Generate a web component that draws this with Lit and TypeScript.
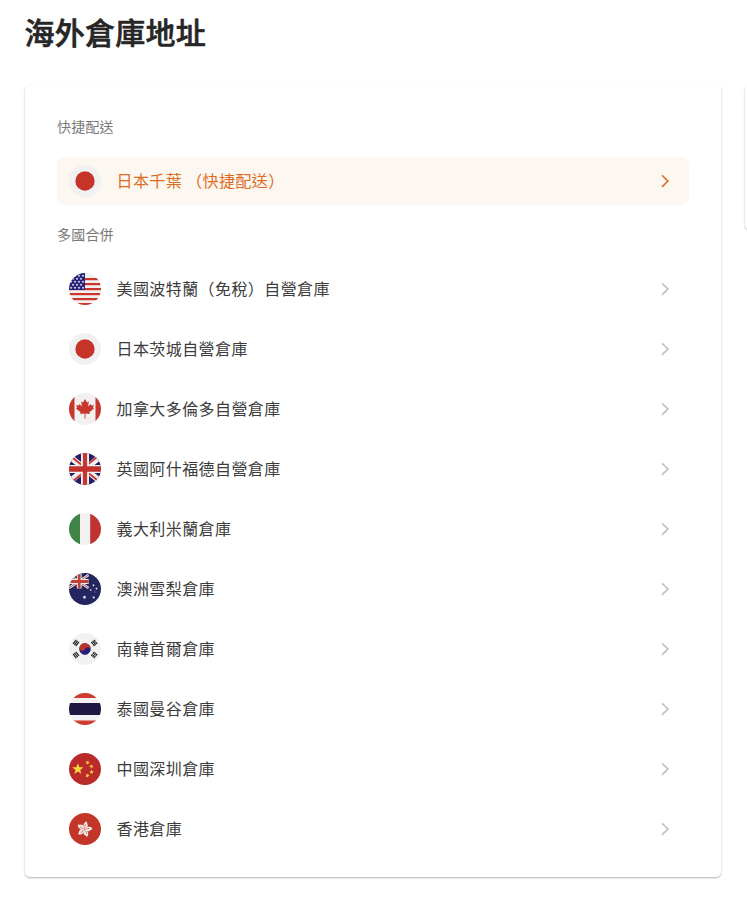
import { LitElement, html, css, svg, type TemplateResult } from "lit";
import { customElement, property } from "lit/decorators.js";

const star = (cx: number, cy: number, r: number, rotate = 0, points = 5, inner = 0.4): string => {
  const out: string[] = [];
  for (let i = 0; i < points * 2; i++) {
    const a = ((rotate - 90 + (i * 180) / points) * Math.PI) / 180;
    const d = i % 2 ? r * inner : r;
    out.push(`${(cx + d * Math.cos(a)).toFixed(2)},${(cy + d * Math.sin(a)).toFixed(2)}`);
  }
  return out.join(" ");
};

const trigram = (x: number, y: number, angle: number, broken: boolean[]) => svg`
  <g transform="translate(${x} ${y}) rotate(${angle})" fill="#2b2b2b">
    ${broken.map((b, i) => {
      const ty = -2.4 + i * 1.7;
      return b
        ? svg`<rect x="-2.6" y=${ty} width="2.4" height="1.3"/><rect x=".2" y=${ty} width="2.4" height="1.3"/>`
        : svg`<rect x="-2.6" y=${ty} width="5.2" height="1.3"/>`;
    })}
  </g>`;

const FLAGS: Record<string, TemplateResult> = {
  jp: svg`<rect width="32" height="32" fill="#f1f1f2"/><circle cx="16" cy="16" r="9.7" fill="#c63429"/>`,
  us: svg`<rect width="32" height="32" fill="#f0f0f0"/>
    ${[5, 10, 15, 20, 25, 30].map((y) => svg`<rect y=${y} width="32" height="2.2" fill="#cd352b"/>`)}
    <rect width="16" height="17" fill="#231f78"/>
    ${[2.2, 5.2, 8.2, 11.2, 14.2].map((y, r) =>
      [2, 6, 10, 14].map((x) => svg`<polygon points=${star(x - (r % 2 ? 2 : 0), y + 0.6, 1.5)} fill="#f0f0f0"/>`)
    )}`,
  ca: svg`<rect width="32" height="32" fill="#f1f1f1"/>
    <path d="M0 0h5.500v32H0zM26.500 0H32v32h-5.500z" fill="#c8372d"/>
    <path d="M16 6l2 3.400 1.900-.9-.8 4.900 2.500-2.500.7 1.500 2.500-.4-.8 2.700 1 .7-4.600 3.900.5 1.700-4.500-.6.100 5h-1l.1-5-4.500.6.5-1.700-4.600-3.900 1-.7-.8-2.700 2.500.4.700-1.500 2.500 2.500-.8-4.900 1.900.9z" fill="#c8372d"/>`,
  gb: svg`<rect width="32" height="32" fill="#251d67"/>
    <path d="M0 3L32 29M32 3L0 29" stroke="#f1f1f1" stroke-width="6"/>
    <path d="M0 1.800L16 14.800M32 30.200L16 17.200M30.500 2L16 13.800M1.500 30L16 18.200" stroke="#c8372d" stroke-width="1.800"/>
    <path d="M16 0v32M0 16h32" stroke="#f1f1f1" stroke-width="8"/>
    <path d="M16 0v32" stroke="#c8372d" stroke-width="4.200"/><path d="M0 16h32" stroke="#bf322e" stroke-width="5.600"/>`,
  it: svg`<rect width="32" height="32" fill="#f1f1f1"/><rect width="11" height="32" fill="#418447"/><rect x="21.200" width="11" height="32" fill="#bf3331"/>`,
  au: svg`<rect width="32" height="32" fill="#23265f"/>
    <path d="M0 2L19.500 15M19.500 2L0 15" stroke="#eee" stroke-width="2.600"/>
    <path d="M0 2L19.500 15M19.500 2L0 15" stroke="#c7403a" stroke-width=".9"/>
    <path d="M10.200 0v15.500M0 8.500h19.700" stroke="#eee" stroke-width="4.800"/>
    <path d="M10.200 0v15.500M0 8.500h19.700" stroke="#c24138" stroke-width="2.800"/>
    <g fill="#eef0f8">
      <polygon points=${star(15.5, 24.2, 1.9, 0, 7, 0.5)}/>
      <polygon points=${star(24.5, 12.4, 1.3, 0, 7, 0.5)}/>
      <polygon points=${star(21.7, 17, 1.2, 0, 7, 0.5)}/>
      <polygon points=${star(27.5, 15.6, 1.3, 0, 7, 0.5)}/>
      <polygon points=${star(24.7, 24.5, 1.4, 0, 7, 0.5)}/>
      <polygon points=${star(25.8, 19, 0.8)}/>
    </g>`,
  kr: svg`<rect width="32" height="32" fill="#f2f2f2"/>
    <g transform="rotate(24 16 16)">
      <circle cx="16" cy="16" r="5.800" fill="#271f78"/>
      <path d="M10.200 16a5.800 5.800 0 0 1 11.600 0a2.900 2.900 0 0 0-5.800 0a2.900 2.900 0 0 1-5.800 0z" fill="#bd3328"/>
    </g>
    ${trigram(7, 10, -52, [false, false, false])}
    ${trigram(25.2, 10, 52, [true, false, true])}
    ${trigram(7, 22, 52, [false, true, false])}
    ${trigram(25.2, 22, -52, [true, true, true])}`,
  th: svg`<rect width="32" height="32" fill="#f1f1f1"/><rect width="32" height="5" fill="#d03a31"/><rect y="27.500" width="32" height="5" fill="#d03a31"/><rect y="10" width="32" height="12" fill="#1f1843"/>`,
  cn: svg`<rect width="32" height="32" fill="#ba2a28"/>
    <g fill="#f7d83e">
      <polygon points=${star(8.9, 16.2, 6)}/>
      <polygon points=${star(18.5, 9.6, 2.4, 20)}/>
      <polygon points=${star(22.4, 13.4, 2.4, 45)}/>
      <polygon points=${star(22.6, 19, 2.4, 5)}/>
      <polygon points=${star(18.4, 22.6, 2.4, 20)}/>
    </g>`,
  hk: svg`<rect width="32" height="32" fill="#c43529"/>
    ${[20, 92, 164, 236, 308].map(
      (a) => svg`<g transform="rotate(${a} 15.500 16.200)">
        <path d="M15.500 15.800C12.300 13.700 12 9.700 15.300 8C15.100 10 18.300 10.700 17.300 13.400C16.900 14.700 16.300 15.400 15.500 15.800z" fill="#f4efee"/>
        <path d="M15.500 15Q14.200 12.800 14.800 11" fill="none" stroke="#c43529" stroke-width=".6"/>
      </g>`
    )}`,
};

@customElement("country-flag")
class CountryFlag extends LitElement {
  @property() code = "jp";
  static styles = css`
    :host { display: block; flex: none; width: 32px; height: 32px; border-radius: 50%; overflow: hidden; }
    svg { display: block; width: 32px; height: 32px; }
  `;
  render() {
    return html`<svg viewBox="0 0 32 32" aria-hidden="true">${FLAGS[this.code]}</svg>`;
  }
}

@customElement("warehouse-row")
class WarehouseRow extends LitElement {
  @property() code = "jp";
  @property() label = "";
  @property({ type: Boolean, reflect: true }) selected = false;
  static styles = css`
    :host {
      display: flex; align-items: center; box-sizing: border-box; height: 48px;
      padding: 0 12px; border-radius: 8px; color: #3c3c3c; cursor: pointer;
    }
    :host([selected]) { background: #fcf7f1; color: #de6c1e; }
    .name {
      flex: 1; margin-left: 15.5px; padding-bottom: 2px; font-size: 16px; line-height: 24px;
      letter-spacing: .42px; white-space: pre;
    }
    .chevron { display: block; flex: none; width: 24px; height: 24px; fill: none; stroke: #bdbdbd; stroke-width: 1.5; }
    :host([selected]) .chevron { stroke: #de6c1e; }
  `;
  render() {
    return html`<country-flag .code=${this.code}></country-flag>
      <span class="name">${this.label}</span>
      <svg class="chevron" viewBox="0 0 24 24" aria-hidden="true"><path d="M9 6.300L15 12.100L9 17.900"/></svg>`;
  }
}

const GROUPS = [
  { title: "快捷配送", rows: [{ code: "jp", label: "日本千葉 （快捷配送）", selected: true }] },
  {
    title: "多國合併",
    rows: [
      { code: "us", label: "美國波特蘭（免稅）自營倉庫" },
      { code: "jp", label: "日本茨城自營倉庫" },
      { code: "ca", label: "加拿大多倫多自營倉庫" },
      { code: "gb", label: "英國阿什福德自營倉庫" },
      { code: "it", label: "義大利米蘭倉庫" },
      { code: "au", label: "澳洲雪梨倉庫" },
      { code: "kr", label: "南韓首爾倉庫" },
      { code: "th", label: "泰國曼谷倉庫" },
      { code: "cn", label: "中國深圳倉庫" },
      { code: "hk", label: "香港倉庫" },
    ],
  },
];

@customElement("app-root")
class AppRoot extends LitElement {
  static styles = css`
    :host {
      display: block; box-sizing: border-box; height: 909px; padding: 10px 0 0 25px; overflow: hidden;
      background: #fff; font-family: "Noto Sans CJK TC", sans-serif;
    }
    h1 {
      margin: 0 0 0 -.5px; font-size: 30px; line-height: 42px; font-weight: 500; letter-spacing: .25px;
      color: #262626; -webkit-text-stroke: .6px #262626;
    }
    .columns { display: flex; align-items: flex-start; gap: 24px; margin-top: 33px; }
    .card {
      flex: none; box-sizing: border-box; border-radius: 5px; background: #fff;
      box-shadow: 0 1px 2px rgba(0, 0, 0, .3);
    }
    .list { width: 696px; height: 792px; padding: 31px 32px; }
    .side { width: 340px; height: 145px; }
    .group { display: flex; flex-direction: column; gap: 12px; margin-bottom: 19px; }
    h2 { margin: 0 0 9px; font-size: 14px; line-height: 20px; font-weight: 400; letter-spacing: .2px; color: #7a7a7a; }
  `;
  render() {
    return html`<h1>海外倉庫地址</h1>
      <div class="columns">
        <section class="card list">
          ${GROUPS.map(
            (g) => html`<div class="group">
              <h2>${g.title}</h2>
              ${g.rows.map(
                (r) => html`<warehouse-row .code=${r.code} .label=${r.label} ?selected=${"selected" in r}></warehouse-row>`
              )}
            </div>`
          )}
        </section>
        <aside class="card side"></aside>
      </div>`;
  }
}
